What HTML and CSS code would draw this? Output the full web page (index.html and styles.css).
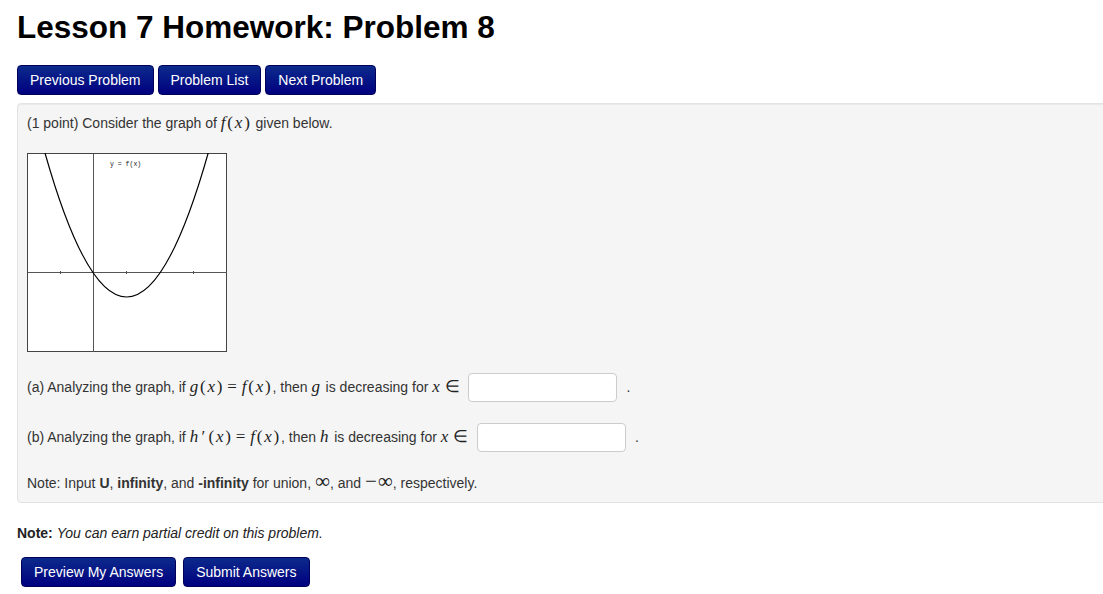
FILE: index.html
```html
<!DOCTYPE html>
<html>
<head>
<meta charset="utf-8">
<title>Lesson 7 Homework: Problem 8</title>
<link rel="stylesheet" href="styles.css">
</head>
<body>
<div class="page">
  <h1 class="title">Lesson 7 Homework: Problem 8</h1>
  <div class="nav">
    <a class="btn">Previous Problem</a>
    <a class="btn">Problem List</a>
    <a class="btn">Next Problem</a>
  </div>
  <div class="problem">
    <div class="line">(1 point) Consider the graph of <span class="m"><i>f</i>(<i>x</i>)</span> given below.</div>
    <div class="graph">
      <svg width="201" height="200" viewBox="0 0 201 200">
        <rect x="0.5" y="0.5" width="199" height="198" fill="#fff" stroke="#444" stroke-width="1"/>
        <line x1="66.5" y1="1" x2="66.5" y2="199" stroke="#555" stroke-width="1"/>
        <line x1="1" y1="119.5" x2="200" y2="119.5" stroke="#555" stroke-width="1"/>
        <line x1="33.5" y1="118" x2="33.5" y2="121" stroke="#555" stroke-width="1"/>
        <line x1="99.5" y1="118" x2="99.5" y2="121" stroke="#555" stroke-width="1"/>
        <line x1="166.5" y1="118" x2="166.5" y2="121" stroke="#555" stroke-width="1"/>
        <path d="M18 0 Q99.6 288 181.2 0" fill="none" stroke="#000" stroke-width="1.2"/>
        <text x="83" y="13" class="glabel">y = f(x)</text>
      </svg>
    </div>
    <div class="part part-a">(a) Analyzing the graph, if <span class="m"><i>g</i>(<i>x</i>)<span class="rel">=</span><i>f</i>(<i>x</i>)</span>, then <span class="m"><i>g</i></span> is decreasing for <span class="m"><i>x</i><span class="rel">∈</span></span><input class="ans" type="text"><span class="dot">.</span></div>
    <div class="part">(b) Analyzing the graph, if <span class="m"><i>h</i><span class="pr">′</span>(<i>x</i>)<span class="rel">=</span><i>f</i>(<i>x</i>)</span>, then <span class="m"><i>h</i></span> is decreasing for <span class="m"><i>x</i><span class="rel">∈</span></span><input class="ans" type="text"><span class="dot">.</span></div>
    <div class="line note">Note: Input <b>U</b>, <b>infinity</b>, and <b>-infinity</b> for union, <span class="inf">∞</span>, and <span class="inf"><span class="minus">−</span>∞</span>, respectively.</div>
  </div>
  <div class="credit"><b>Note:</b> <i>You can earn partial credit on this problem.</i></div>
  <div class="actions">
    <a class="btn">Preview My Answers</a>
    <a class="btn">Submit Answers</a>
  </div>
</div>
</body>
</html>
```
FILE: styles.css
```css
html, body {
  margin: 0;
  padding: 0;
  overflow: hidden;
  background: #fff;
}
body {
  font-family: "Liberation Sans", Arial, sans-serif;
  font-size: 14px;
  line-height: 20px;
  color: #333;
}
.page {
  padding: 0 0 0 17px;
}
.title {
  margin: 0;
  padding-top: 8px;
  font-size: 31.5px;
  line-height: 38px;
  font-weight: bold;
  color: #000;
}
.nav {
  display: flex;
  gap: 4px;
  margin-top: 19px;
}
.btn {
  display: inline-block;
  padding: 4px 12px;
  line-height: 20px;
  font-size: 14px;
  color: #fff;
  background: linear-gradient(to bottom, #0c2a8c, #00007f);
  border: 1px solid #00005a;
  border-radius: 4px;
  cursor: pointer;
}
.problem {
  margin-top: 8px;
  margin-right: -40px;
  padding: 9px;
  background: #f5f5f5;
  border: 1px solid #e3e3e3;
  border-radius: 4px;
  box-shadow: inset 0 1px 1px rgba(0,0,0,0.05);
}
.line {
  height: 20px;
  line-height: 20px;
}
.m {
  font-family: "Liberation Serif", "Times New Roman", serif;
  font-size: 17px;
  line-height: 0;
  letter-spacing: 1.8px;
  color: #222;
}
.m i {
  font-style: italic;
}
.rel {
  padding: 0 3px;
  font-style: normal;
}
.pr {
  margin: 0 1.5px 0 1.5px;
}
.inf {
  font-family: "Liberation Serif", "Times New Roman", serif;
  font-size: 21px;
  line-height: 0;
  color: #222;
}
.minus {
  margin-right: 1px;
}
.graph {
  margin-top: 20px;
  height: 200px;
}
.graph svg {
  display: block;
}
.glabel {
  font-family: "Liberation Mono", monospace;
  font-size: 6.5px;
  fill: #111;
}
.part {
  margin-top: 21px;
  height: 29px;
  line-height: 29px;
}
.part-a {
  margin-top: 20px;
}
.ans {
  box-sizing: border-box;
  width: 149px;
  height: 29px;
  margin: 0 0 0 4px;
  padding: 4px 6px;
  vertical-align: top;
  background: #fff;
  border: 1px solid #ccc;
  border-radius: 4px;
  font-size: 14px;
}
.dot {
  margin-left: 9px;
}
.note {
  margin-top: 21px;
}
.credit {
  margin-top: 20px;
  color: #222;
}
.actions {
  display: flex;
  gap: 7px;
  margin: 14px 0 0 4px;
}
```
